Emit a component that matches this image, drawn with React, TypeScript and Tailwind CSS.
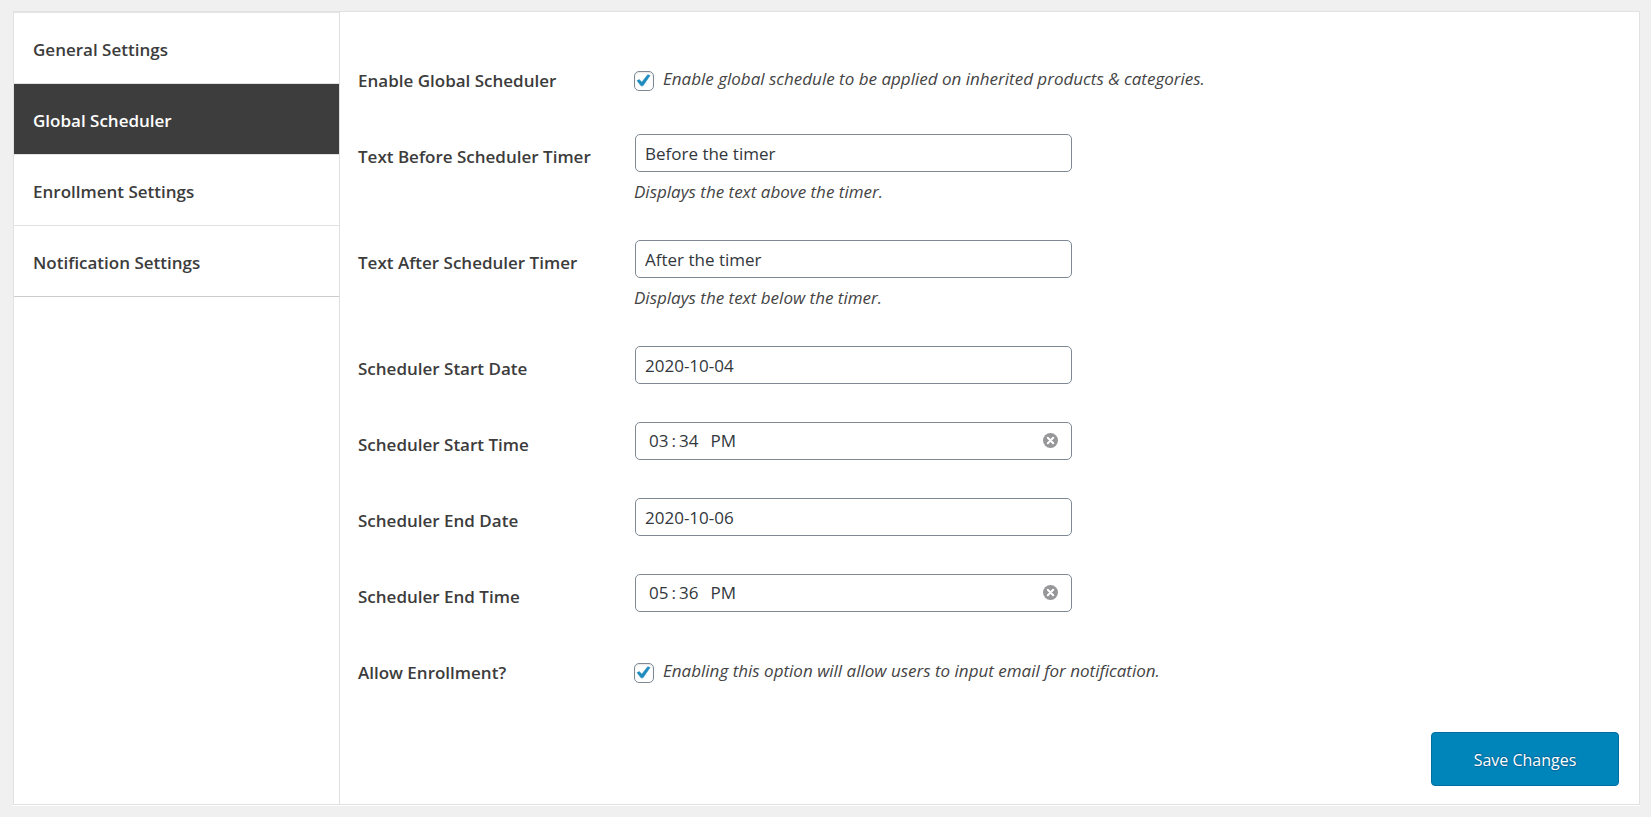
import React, { useState } from "react";

const tabs = [
  "General Settings",
  "Global Scheduler",
  "Enrollment Settings",
  "Notification Settings",
];

type RowProps = {
  id: string;
  label: string;
  children: React.ReactNode;
};

const Row = ({ id, label, children }: RowProps) => (
  <div className="flex min-h-[76px]">
    <label
      htmlFor={id}
      className="w-[276px] shrink-0 pt-[30px] leading-6 font-semibold text-[#3c3c3c]"
    >
      {label}
    </label>
    <div className="min-w-0 grow">{children}</div>
  </div>
);

const inputClass =
  "block h-[38px] w-full rounded-[5px] border border-[#7e8993] bg-white px-[9px] text-[#32373c] outline-none focus:border-[#007cba]";

type FieldProps = {
  id: string;
  label: string;
  value: string;
  onChange: (value: string) => void;
  description?: string;
};

const TextRow = ({ id, label, value, onChange, description }: FieldProps) => (
  <Row id={id} label={label}>
    <div className="max-w-[438px] pt-[19px] pl-px">
      <input
        id={id}
        type="text"
        value={value}
        onChange={(e) => onChange(e.target.value)}
        className={inputClass}
      />
    </div>
    {description && (
      <p className="pt-2 pb-[17px] leading-6 text-[#444] italic">
        {description}
      </p>
    )}
  </Row>
);

const TimeRow = ({ id, label, value, onChange }: FieldProps) => (
  <Row id={id} label={label}>
    <div className="relative mt-[19px] ml-px max-w-[437px]">
      <input
        id={id}
        type="time"
        value={value}
        onChange={(e) => onChange(e.target.value)}
        className={`${inputClass} [&::-webkit-calendar-picker-indicator]:hidden [&::-webkit-datetime-edit-ampm-field]:ml-1 [&::-webkit-datetime-edit-hour-field]:ml-[3px] [&::-webkit-datetime-edit-text]:px-[2px]`}
      />
      <button
        type="button"
        aria-label={`Clear ${label}`}
        onClick={() => onChange("")}
        className="absolute top-[11px] right-[14px] cursor-pointer"
      >
        <svg width="15" height="15" viewBox="0 0 15 15">
          <circle cx="7.5" cy="7.5" r="7.5" fill="#97979a" />
          <path
            d="M4.8 4.8l5.4 5.4M10.2 4.8l-5.4 5.4"
            stroke="#fff"
            strokeWidth="2"
            strokeLinecap="round"
          />
        </svg>
      </button>
    </div>
  </Row>
);

type CheckRowProps = {
  id: string;
  label: string;
  checked: boolean;
  onChange: (checked: boolean) => void;
  description: string;
};

const CheckRow = ({
  id,
  label,
  checked,
  onChange,
  description,
}: CheckRowProps) => (
  <Row id={id} label={label}>
    <div className="flex gap-[9px] pt-7">
      <span className="relative mt-1 h-5 w-5 shrink-0">
        <input
          id={id}
          type="checkbox"
          checked={checked}
          onChange={(e) => onChange(e.target.checked)}
          className="block h-5 w-5 appearance-none rounded-[5px] border border-[#7e8993] bg-white shadow-[inset_0_1px_2px_rgba(0,0,0,0.1)]"
        />
        {checked && (
          <svg
            className="pointer-events-none absolute inset-0"
            width="20"
            height="20"
            viewBox="0 0 20 20"
          >
            <path
              d="M3.1 9.7L5.3 8.6L7.8 11.2L13.7 3.7L16 4.6L9 14.8H7Z"
              fill="#1e8cbe"
              stroke="#1e8cbe"
              strokeWidth="0.6"
              strokeLinejoin="round"
            />
          </svg>
        )}
      </span>
      <span className="leading-6 text-[#444] italic">{description}</span>
    </div>
  </Row>
);

const App = () => {
  const [activeTab, setActiveTab] = useState("Global Scheduler");
  const [enabled, setEnabled] = useState(true);
  const [textBefore, setTextBefore] = useState("Before the timer");
  const [textAfter, setTextAfter] = useState("After the timer");
  const [startDate, setStartDate] = useState("2020-10-04");
  const [startTime, setStartTime] = useState("15:34");
  const [endDate, setEndDate] = useState("2020-10-06");
  const [endTime, setEndTime] = useState("17:36");
  const [allowEnrollment, setAllowEnrollment] = useState(true);

  return (
    <div className="min-h-screen bg-[#f0f0f0] pt-[11px] pr-[11px] pb-3 pl-[13px] font-['Open_Sans',sans-serif] text-[17px]">
      <div className="flex min-h-[794px] border border-[#e2e2e2] bg-white shadow-[0_1px_0_#fff]">
        {/* Sidebar tabs */}
        <nav className="w-[326px] shrink-0 border-r border-[#dfdfdf]">
          <ul className="border-t border-[#e5e5e5]">
            {tabs.map((tab) => (
              <li
                key={tab}
                className="border-b border-[#e2e2e2] last:border-[#ccc]"
              >
                <a
                  href="#"
                  onClick={(e) => {
                    e.preventDefault();
                    setActiveTab(tab);
                  }}
                  className={`flex h-[70px] items-center px-[19px] pt-[3px] font-semibold ${
                    tab === activeTab
                      ? "bg-[#3d3d3d] text-white"
                      : "text-[#3c3c3c]"
                  }`}
                >
                  {tab}
                </a>
              </li>
            ))}
          </ul>
        </nav>

        {/* Settings form */}
        <form
          onSubmit={(e) => e.preventDefault()}
          className="flex min-w-0 grow flex-col pt-[27px] pr-5 pb-[18px] pl-[18px]"
        >
          <CheckRow
            id="enable"
            label="Enable Global Scheduler"
            checked={enabled}
            onChange={setEnabled}
            description="Enable global schedule to be applied on inherited products & categories."
          />
          <TextRow
            id="text-before"
            label="Text Before Scheduler Timer"
            value={textBefore}
            onChange={setTextBefore}
            description="Displays the text above the timer."
          />
          <TextRow
            id="text-after"
            label="Text After Scheduler Timer"
            value={textAfter}
            onChange={setTextAfter}
            description="Displays the text below the timer."
          />
          <TextRow
            id="start-date"
            label="Scheduler Start Date"
            value={startDate}
            onChange={setStartDate}
          />
          <TimeRow
            id="start-time"
            label="Scheduler Start Time"
            value={startTime}
            onChange={setStartTime}
          />
          <TextRow
            id="end-date"
            label="Scheduler End Date"
            value={endDate}
            onChange={setEndDate}
          />
          <TimeRow
            id="end-time"
            label="Scheduler End Time"
            value={endTime}
            onChange={setEndTime}
          />
          <CheckRow
            id="allow"
            label="Allow Enrollment?"
            checked={allowEnrollment}
            onChange={setAllowEnrollment}
            description="Enabling this option will allow users to input email for notification."
          />
          <button
            type="submit"
            className="mt-auto h-[54px] w-[188px] cursor-pointer self-end rounded-[4px] border border-[#006ea1] bg-[#0085ba] pt-0.5 text-base text-white [text-shadow:0_-1px_1px_#006799,1px_0_1px_#006799,0_1px_1px_#006799]"
          >
            Save Changes
          </button>
        </form>
      </div>
    </div>
  );
};

export default App;
